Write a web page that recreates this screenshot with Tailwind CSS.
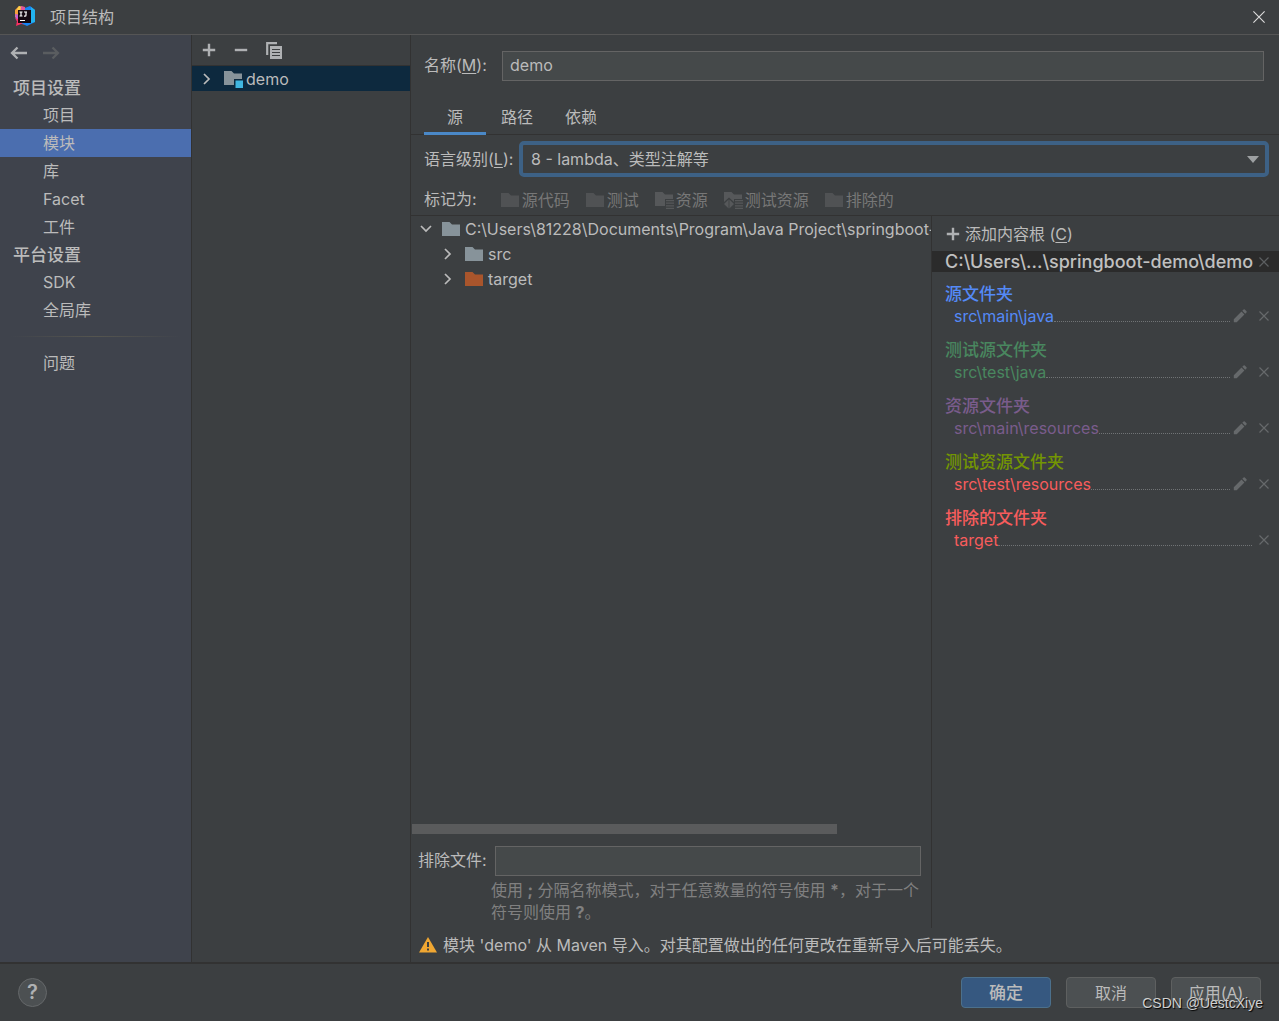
<!DOCTYPE html>
<html lang="zh-CN">
<head>
<meta charset="utf-8">
<title>项目结构</title>
<script src="https://cdn.jsdelivr.net/npm/@tailwindcss/browser@4"></script>
</head>
<body class="flex h-screen flex-col overflow-hidden bg-[#3c3f41] font-['Inter','Noto_Sans_CJK_SC',sans-serif] text-base leading-6 text-[#bbbbbb]">

<!-- Shared icon shapes -->
<svg class="hidden">
  <symbol id="folder" viewBox="0 0 19 16"><path d="M0 1h7.5l2.5 2.5h8V15H0z" fill="currentColor"/></symbol>
  <symbol id="lines" viewBox="0 0 8 9"><path d="M0 .5h8M0 3.2h8M0 5.9h8M0 8.5h8" stroke="currentColor" stroke-width="1.3"/></symbol>
  <symbol id="chevron" viewBox="0 0 10 12"><path d="M2 1l5 5-5 5" fill="none" stroke="currentColor" stroke-width="1.7"/></symbol>
  <symbol id="plus" viewBox="0 0 14 14"><path d="M7 .8v12.4M.8 7h12.4" stroke="currentColor" stroke-width="2.4"/></symbol>
  <symbol id="cross" viewBox="0 0 10 10"><path d="M.5.5l9 9M9.500 .5l-9 9" stroke="currentColor" stroke-width="1.2"/></symbol>
  <symbol id="pencil" viewBox="0 0 14 14"><path d="M.8 10.300l7.700-7.700 2.900 2.900-7.700 7.700H.8zM9.300 1.800l1.300-1.300q.6-.5 1.200 0l1.700 1.700q.5.600 0 1.200l-1.300 1.300z" fill="currentColor"/></symbol>
</svg>

<header class="flex h-[35px] shrink-0 items-center border-b border-[#555555] pr-[11px] pl-[14px]">
  <svg class="size-[22px]" viewBox="0 0 22 22">
    <path d="M1 4l4-4 5 1 3 4-6 10-6-4z" fill="#f7a13c"/>
    <path d="M5 0l4 2-3 6-3-5z" fill="#fdd04c"/>
    <path d="M7 0l4 1 1 5-6 2z" fill="#e0559c"/>
    <path d="M1 8l6 1v8l-5-3z" fill="#c95fd0"/>
    <path d="M1 12l6 2 6 5-6-1-5 2 1-5z" fill="#fb2f63"/>
    <path d="M11 2l5-2 5 4v12l-8 4-6-3 4-6z" fill="#1684f5"/>
    <path d="M17 1l4 3v12l-4 1z" fill="#22b3ef"/>
    <path d="M4 4h13v13H4z" fill="#150a12"/>
    <path d="M5.500 6h3M7 6v4M5.500 10h3M10 6h3M12 6v3.200q0 1-1 1h-1M6 14.500h5" stroke="#fff" stroke-width="1.200" fill="none"/>
  </svg>
  <h1 class="ml-[14px] grow">项目结构</h1>
  <button aria-label="关闭" class="p-[3px] text-[#dddddd]"><svg class="size-3" viewBox="0 0 12 12"><path d="M.4.4l11.200 11.200M11.600.4L.4 11.600" stroke="currentColor" stroke-width="1.100"/></svg></button>
</header>

<div class="flex min-h-0 grow">
  <!-- Settings navigation -->
  <nav class="w-48 shrink-0 border-r border-[#323232] bg-[#3f434c]">
    <div class="flex h-[39px] items-center gap-4 pb-[3px] pl-[10px]">
      <button aria-label="后退" class="text-[#afb1b3]"><svg class="h-[14px] w-[17px]" viewBox="0 0 17 14"><path d="M17 7H2M7.500 1.500L2 7l5.500 5.500" fill="none" stroke="currentColor" stroke-width="2.300"/></svg></button>
      <button aria-label="前进" disabled class="text-[#5a5d60]"><svg class="h-[14px] w-[17px]" viewBox="0 0 17 14"><path d="M0 7h15M9.500 1.500L15 7l-5.500 5.500" fill="none" stroke="currentColor" stroke-width="2.300"/></svg></button>
    </div>
    <h2 class="h-[27px] pl-[13px] text-[17px] leading-[28px] font-medium">项目设置</h2>
    <a href="#" class="block pl-[43px] leading-7">项目</a>
    <a href="#" aria-current="page" class="block bg-[#4b6eaf] pl-[43px] leading-7">模块</a>
    <a href="#" class="block pl-[43px] leading-7">库</a>
    <a href="#" class="block pl-[43px] leading-7">Facet</a>
    <a href="#" class="block pl-[43px] leading-7">工件</a>
    <h2 class="h-[27px] pl-[13px] text-[17px] leading-[28px] font-medium">平台设置</h2>
    <a href="#" class="block pl-[43px] leading-7">SDK</a>
    <a href="#" class="block pl-[43px] leading-7">全局库</a>
    <div class="mx-[10px] my-3 h-px bg-linear-to-r from-transparent via-[#55554f] to-transparent"></div>
    <a href="#" class="block pl-[43px] leading-7">问题</a>
  </nav>

  <!-- Module list -->
  <section class="w-[219px] shrink-0 border-r border-[#323232]">
    <div class="flex h-[31px] items-center gap-[18px] border-b border-[#323232] pl-[10px] text-[#afb1b3]">
      <button aria-label="添加"><svg class="size-[14px]"><use href="#plus"/></svg></button>
      <button aria-label="移除"><svg class="size-[14px]" viewBox="0 0 14 14"><path d="M.8 7h12.400" stroke="currentColor" stroke-width="2.400"/></svg></button>
      <button aria-label="复制"><svg class="h-[17px] w-4" viewBox="0 0 16 17"><path d="M1.200 13V1.200H11" fill="none" stroke="currentColor" stroke-width="2.200"/><path d="M4 4h12v13H4z" fill="currentColor"/><path d="M6 7.500h8M6 10.500h8M6 13.500h8" stroke="#3c3f41" stroke-width="1.100"/></svg></button>
    </div>
    <div class="flex h-[25px] items-center bg-[#0d293e] pl-[10px]">
      <svg class="h-3 w-[10px]"><use href="#chevron"/></svg>
      <svg class="ml-3 h-[19px] w-[22px]" viewBox="0 0 22 19"><path d="M0 2h7.500L10 4.500h8V16H0z" fill="#87939a"/><path d="M10 10h10v9H10z" fill="#0d293e"/><path d="M11.500 11.500h7.500V19h-7.500z" fill="#40b6e0"/></svg>
      <span>demo</span>
    </div>
  </section>

  <main class="flex min-w-0 grow flex-col">
    <div class="flex h-[65px] shrink-0 items-center pr-[15px] pl-[13px] pb-[3px]">
      <label for="name" class="w-[78px] pb-[2px]">名称(<u class="underline-offset-2">M</u>):</label>
      <input id="name" value="demo" class="h-[30px] min-w-0 grow border border-[#646464] bg-[#45494a] px-[7px] pb-[2px]">
    </div>
    <div role="tablist" class="flex h-[35px] shrink-0 border-b border-[#323232] pl-[13px]">
      <button role="tab" aria-selected="true" class="-mb-px w-[62px] border-b-[3px] border-[#4a88c7] pt-[2px]">源</button>
      <button role="tab" class="ml-[13px] w-9 whitespace-nowrap">路径</button>
      <button role="tab" class="ml-7 w-9 whitespace-nowrap">依赖</button>
    </div>
    <div class="flex h-[49px] shrink-0 items-center pr-[10px] pb-[2px] pl-[13px]">
      <label for="level" class="w-[95px] whitespace-nowrap">语言级别(<u class="underline-offset-2">L</u>):</label>
      <div class="relative min-w-0 grow">
        <select id="level" class="block h-9 w-full appearance-none rounded-[5px] border-4 border-[#3d6185] bg-[#3c3f41] px-2"><option>8 - lambda、类型注解等</option></select>
        <svg class="pointer-events-none absolute top-[15px] right-[10px] h-[7px] w-3" viewBox="0 0 12 7"><path d="M0 0h12L6 7z" fill="#9da0a2"/></svg>
      </div>
    </div>
    <div class="flex h-8 shrink-0 items-center gap-4 border-b border-[#323232] pl-[13px] whitespace-nowrap">
      <span class="mr-2 pb-[2px]">标记为:</span>
      <button disabled class="flex items-center gap-[2px] text-[#777777]"><svg class="h-4 w-[19px] text-[#505254]"><use href="#folder"/></svg>源代码</button>
      <button disabled class="flex items-center gap-[2px] text-[#777777]"><svg class="h-4 w-[19px] text-[#505254]"><use href="#folder"/></svg>测试</button>
      <button disabled class="flex items-center gap-[2px] text-[#777777]"><svg class="h-[18px] w-[19px] text-[#56585a]" viewBox="0 0 19 18"><path d="M0 1h7.500L10 3.500h8V8h-8v7H0z" fill="currentColor"/><use href="#lines" x="11" y="9" width="8" height="9"/></svg>资源</button>
      <button disabled class="flex items-center gap-[2px] text-[#777777]"><svg class="h-[18px] w-[19px] text-[#56585a]" viewBox="0 0 19 18"><path d="M0 1h7.500L10 3.500h8V8h-8v3L5 6.500 0 11z" fill="currentColor"/><path d="M4.600 8.500v9L0 13zM5.400 8.500v9L10 13z" fill="currentColor"/><use href="#lines" x="11" y="9" width="8" height="9"/></svg>测试资源</button>
      <button disabled class="flex items-center gap-[2px] text-[#777777]"><svg class="h-4 w-[19px] text-[#505254]"><use href="#folder"/></svg>排除的</button>
    </div>

    <div class="flex min-h-0 grow">
      <!-- Content tree -->
      <div class="flex min-w-0 grow flex-col">
        <ul class="min-h-0 grow overflow-hidden whitespace-nowrap">
          <li class="flex h-[25px] items-center pl-[9px]">
            <svg class="h-[10px] w-3 shrink-0" viewBox="0 0 12 10"><path d="M1 2l5 5 5-5" fill="none" stroke="currentColor" stroke-width="1.700"/></svg>
            <svg class="ml-[10px] h-4 w-[19px] shrink-0 text-[#87939a]"><use href="#folder"/></svg>
            <span class="ml-1">C:\Users\81228\Documents\Program\Java Project\springboot-demo\demo</span>
          </li>
          <li class="flex h-[25px] items-center pl-8">
            <svg class="h-3 w-[10px]"><use href="#chevron"/></svg>
            <svg class="ml-3 h-4 w-[19px] text-[#87939a]"><use href="#folder"/></svg>
            <span class="ml-1">src</span>
          </li>
          <li class="flex h-[25px] items-center pl-8">
            <svg class="h-3 w-[10px]"><use href="#chevron"/></svg>
            <svg class="ml-3 h-4 w-[19px] text-[#a9552c]"><use href="#folder"/></svg>
            <span class="ml-1">target</span>
          </li>
        </ul>
        <div class="px-px"><div class="h-[10px] w-[82%] bg-[#5a5b5c]"></div></div>
        <div class="mt-3 flex shrink-0 items-center pr-[10px] pl-[7px]">
          <label for="exclude" class="w-[77px] pb-[2px] whitespace-nowrap">排除文件:</label>
          <input id="exclude" class="h-[30px] min-w-0 grow border border-[#646464] bg-[#45494a] px-2">
        </div>
        <p class="mt-[3px] h-[49px] shrink-0 pr-[6px] pl-[80px] leading-[22px] text-[#808080]">使用 <b>;</b> 分隔名称模式，对于任意数量的符号使用 <b>*</b>，对于一个符号则使用 <b>?</b>。</p>
      </div>

      <!-- Content root details -->
      <aside class="w-[348px] shrink-0 border-l border-[#323232]">
        <button class="flex h-[35px] items-center gap-[5px] pl-[14px]"><svg class="size-[14px] text-[#afb1b3]"><use href="#plus"/></svg><span>添加内容根 (<u class="underline-offset-2">C</u>)</span></button>
        <div class="flex h-[21px] items-center justify-between bg-[#2b2b2b] pr-[10px] pl-[13px]">
          <span class="text-lg leading-[21px] font-medium text-[#c0c0c0]">C:\Users\...\springboot-demo\demo</span>
          <button aria-label="移除内容根" class="text-[#5c5f61]"><svg class="size-[10px]"><use href="#cross"/></svg></button>
        </div>
        <div class="flex flex-col gap-3 pt-[11px] pr-[10px] pl-[13px] text-[#66696b]">
          <section>
            <h3 class="text-[17px] leading-[22px] font-medium text-[#548af7]">源文件夹</h3>
            <div class="flex h-[22px] items-center pl-[9px]"><a href="#" class="text-[#548af7]">src\main\java</a><span class="mt-[11px] grow border-b border-dotted border-[#707375]"></span><button aria-label="编辑" class="ml-[3px]"><svg class="size-[14px]"><use href="#pencil"/></svg></button><button aria-label="移除" class="ml-3"><svg class="size-[10px]"><use href="#cross"/></svg></button></div>
          </section>
          <section>
            <h3 class="text-[17px] leading-[22px] font-medium text-[#49875f]">测试源文件夹</h3>
            <div class="flex h-[22px] items-center pl-[9px]"><a href="#" class="text-[#49875f]">src\test\java</a><span class="mt-[11px] grow border-b border-dotted border-[#707375]"></span><button aria-label="编辑" class="ml-[3px]"><svg class="size-[14px]"><use href="#pencil"/></svg></button><button aria-label="移除" class="ml-3"><svg class="size-[10px]"><use href="#cross"/></svg></button></div>
          </section>
          <section>
            <h3 class="text-[17px] leading-[22px] font-medium text-[#7a5c8c]">资源文件夹</h3>
            <div class="flex h-[22px] items-center pl-[9px]"><a href="#" class="text-[#7a5c8c]">src\main\resources</a><span class="mt-[11px] grow border-b border-dotted border-[#707375]"></span><button aria-label="编辑" class="ml-[3px]"><svg class="size-[14px]"><use href="#pencil"/></svg></button><button aria-label="移除" class="ml-3"><svg class="size-[10px]"><use href="#cross"/></svg></button></div>
          </section>
          <section>
            <h3 class="text-[17px] leading-[22px] font-medium text-[#739503]">测试资源文件夹</h3>
            <div class="flex h-[22px] items-center pl-[9px]"><a href="#" class="text-[#f75c5c]">src\test\resources</a><span class="mt-[11px] grow border-b border-dotted border-[#707375]"></span><button aria-label="编辑" class="ml-[3px]"><svg class="size-[14px]"><use href="#pencil"/></svg></button><button aria-label="移除" class="ml-3"><svg class="size-[10px]"><use href="#cross"/></svg></button></div>
          </section>
          <section>
            <h3 class="text-[17px] leading-[22px] font-medium text-[#f75c5c]">排除的文件夹</h3>
            <div class="flex h-[22px] items-center pl-[9px]"><a href="#" class="text-[#f75c5c]">target</a><span class="mt-[11px] grow border-b border-dotted border-[#707375]"></span><button aria-label="移除" class="ml-[7px]"><svg class="size-[10px]"><use href="#cross"/></svg></button></div>
          </section>
        </div>
      </aside>
    </div>

    <div class="flex h-[34px] shrink-0 items-center gap-[6px] pl-2">
      <svg class="h-4 w-[18px]" viewBox="0 0 18 16"><path d="M9 0l9 15.500H0z" fill="#f0a732"/><path d="M8 5h2v5H8zM8 11.500h2v2H8z" fill="#3c3f41"/></svg>
      <span>模块 'demo' 从 Maven 导入。对其配置做出的任何更改在重新导入后可能丢失。</span>
    </div>
  </main>
</div>

<footer class="relative flex h-[59px] shrink-0 items-center gap-[15px] border-t-2 border-[#323232] pr-[18px] pl-[18px]">
  <button aria-label="帮助" class="mr-auto size-[29px] rounded-full border border-[#65686a] bg-[#4c5052] text-xl leading-[27px] font-semibold text-[#afb1b3]">?</button>
  <button class="h-[31px] w-[90px] rounded-[4px] border border-[#4c708c] bg-[#365880] text-[17px] font-medium">确定</button>
  <button class="h-[31px] w-[90px] rounded-[4px] border border-[#5e6060] bg-[#4c5052]">取消</button>
  <button class="h-[31px] w-[90px] rounded-[4px] border border-[#5e6060] bg-[#4c5052]">应用(<u class="underline-offset-2">A</u>)</button>
  <span class="pointer-events-none absolute right-4 bottom-2 text-sm leading-5 font-['Liberation_Sans',sans-serif] text-[#d0d0d0] text-shadow-[1px_1px_1px_#000000]">CSDN @UestcXiye</span>
</footer>
</body>
</html>
